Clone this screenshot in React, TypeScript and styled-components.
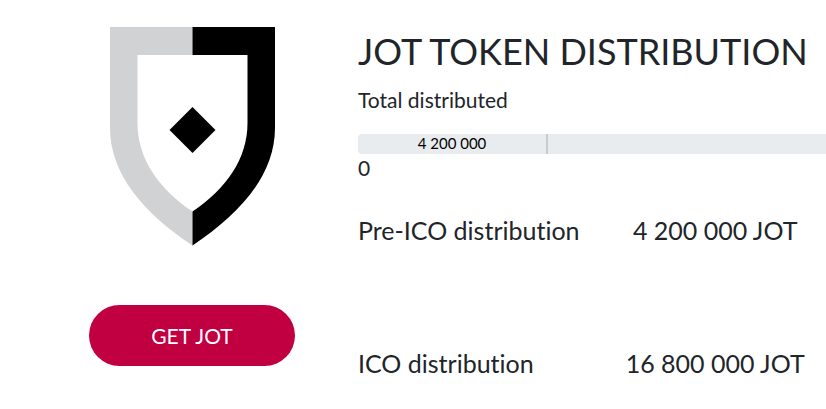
import React from "react";
import styled, { createGlobalStyle } from "styled-components";

const GlobalStyle = createGlobalStyle`
  * { box-sizing: border-box; }
  body {
    margin: 0;
    background: #fff;
    color: #212529;
    font-family: Lato, "Liberation Sans", sans-serif;
    font-variant-ligatures: none;
    overflow-x: hidden;
  }
`;

const Page = styled.main`
  display: grid;
  grid-template-columns: 206px minmax(0, 1fr);
  column-gap: 63px;
  align-items: start;
  padding: 27px 0 24px 89px;
`;

const Brand = styled.section`
  display: flex;
  flex-direction: column;
  align-items: center;
  gap: 59px;
`;

const Shield = styled.svg`
  display: block;
  width: 165px;
  height: 219px;
`;

const GetButton = styled.button`
  width: 100%;
  height: 61px;
  border: 0;
  border-radius: 31px;
  background: #c10042;
  color: #fff;
  font: 400 21px/30px Lato, "Liberation Sans", sans-serif;
  cursor: pointer;
`;

const Title = styled.h1`
  margin: 0;
  font-size: 36px;
  line-height: 48px;
  font-weight: 400;
  white-space: nowrap;
`;

const Caption = styled.p`
  margin: 10px 0 19px;
  font-size: 21px;
  line-height: 30px;
`;

const Track = styled.div`
  display: flex;
  height: 20px;
  overflow: hidden;
  border-radius: 4px 0 0 4px;
  background: #e9ecef;
`;

const Segment = styled.div`
  flex: 0 0 190px;
  border-right: 2px solid #c8cacc;
  color: #000;
  font-size: 15px;
  line-height: 18px;
  text-align: center;
`;

const Scale = styled.div`
  font-size: 21px;
  line-height: 28px;
`;

const Rows = styled.dl`
  display: grid;
  row-gap: 97px;
  margin: 30px 0 0;
`;

const Row = styled.div`
  display: grid;
  grid-template-columns: 10fr 9fr;
  font-size: 25px;
  line-height: 36px;
  white-space: nowrap;
`;

const Label = styled.dt`
  margin: 0;
`;

const Amount = styled.dd`
  margin: 0;
  text-align: center;
`;

const distribution = [
  { label: "Pre-ICO distribution", amount: "4 200 000 JOT" },
  { label: "ICO distribution", amount: "16 800 000 JOT" },
];

export default function App() {
  return (
    <>
      <GlobalStyle />
      <Page>
        <Brand>
          <Shield viewBox="0 0 165 219" role="img" aria-label="JOT shield">
            <path
              fill="#d1d2d4"
              d="M0 0H82.5V28H27.5V96C27.5 132 49 162 82.5 184.500V218.500C35 187 0 148 0 101Z"
            />
            <path
              fill="#000"
              d="M165 0H82.500V28H137.500V96C137.500 132 116 162 82.500 184.500V218.500C130 187 165 148 165 101Z"
            />
            <path fill="#000" d="M82.500 80L105.500 103L82.500 126L59.500 103Z" />
          </Shield>
          <GetButton type="button">GET JOT</GetButton>
        </Brand>
        <section>
          <Title>JOT TOKEN DISTRIBUTION</Title>
          <Caption>Total distributed</Caption>
          <Track>
            <Segment>4 200 000</Segment>
          </Track>
          <Scale>0</Scale>
          <Rows>
            {distribution.map(({ label, amount }) => (
              <Row key={label}>
                <Label>{label}</Label>
                <Amount>{amount}</Amount>
              </Row>
            ))}
          </Rows>
        </section>
      </Page>
    </>
  );
}
